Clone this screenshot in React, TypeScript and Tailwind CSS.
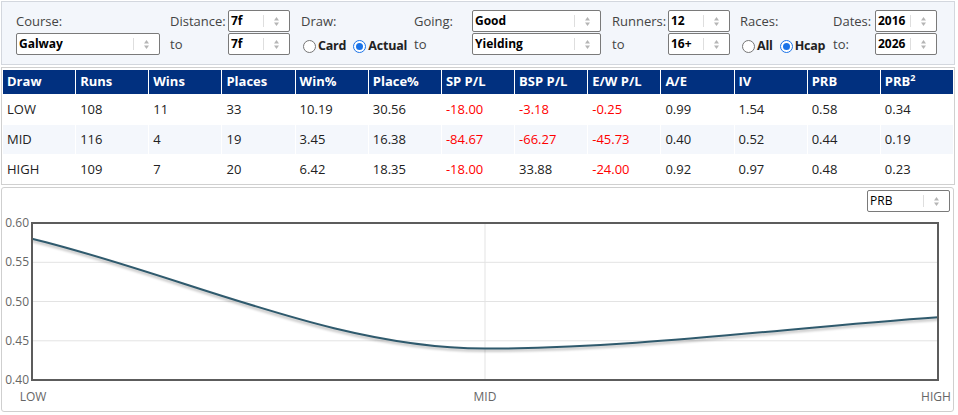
import React from "react";

const font = { fontFamily: '"Open Sans", "Liberation Sans", sans-serif' };

const Arrows = () => (
  <svg width="7" height="11" viewBox="0 0 7 11" className="shrink-0">
    <path d="M3.5 1 L6 4.5 L1 4.5 Z" fill="#b5b5b5" />
    <path d="M3.5 10 L6 6.5 L1 6.5 Z" fill="#b5b5b5" />
  </svg>
);

interface SelectProps {
  value: string;
  width: string;
  bold?: boolean;
}

const Select = ({ value, width, bold = true }: SelectProps) => (
  <div
    className={`flex h-[22px] ${width} items-center rounded-[2px] border border-[#7a7a7a] bg-white text-[12px] text-black`}
  >
    <span className={`flex-1 pl-[2px] ${bold ? "font-bold" : ""}`}>{value}</span>
    <span className="h-[12px] w-px bg-[#dedede]" />
    <span className="flex w-[25px] justify-center">
      <Arrows />
    </span>
  </div>
);

const Radio = ({ checked, label }: { checked?: boolean; label: string }) => (
  <label className="flex items-center gap-[2px]">
    {checked ? (
      <span className="flex h-[13px] w-[13px] items-center justify-center rounded-full border-[1.5px] border-[#1a73e8] bg-white">
        <span className="h-[7px] w-[7px] rounded-full bg-[#1a73e8]" />
      </span>
    ) : (
      <span className="h-[13px] w-[13px] rounded-full border border-[#767676] bg-white" />
    )}
    <span className="text-[12.5px] font-bold tracking-[-0.2px] text-[#222]">{label}</span>
  </label>
);

const Label = ({ children }: { children: React.ReactNode }) => (
  <div className="flex h-[23px] items-center text-[13px] text-[#444]">{children}</div>
);

const headers = ["Draw", "Runs", "Wins", "Places", "Win%", "Place%", "SP P/L", "BSP P/L", "E/W P/L", "A/E", "IV", "PRB"];

const rows = [
  ["LOW", "108", "11", "33", "10.19", "30.56", "-18.00", "-3.18", "-0.25", "0.99", "1.54", "0.58", "0.34"],
  ["MID", "116", "4", "19", "3.45", "16.38", "-84.67", "-66.27", "-45.73", "0.40", "0.52", "0.44", "0.19"],
  ["HIGH", "109", "7", "20", "6.42", "18.35", "-18.00", "33.88", "-24.00", "0.92", "0.97", "0.48", "0.23"],
];

const Chart = () => {
  const curve =
    "M30 26.7 C181 63.3 332 136.6 483 136.6 C634 136.6 785 115.7 936 105.2";
  const yLabels = [
    { t: "0.60", y: 11 },
    { t: "0.55", y: 50.3 },
    { t: "0.50", y: 89.5 },
    { t: "0.45", y: 128.8 },
    { t: "0.40", y: 168 },
  ];
  return (
    <svg width="950" height="198" viewBox="0 0 950 198" className="block">
      <defs>
        <filter id="sh" x="-5%" y="-50%" width="110%" height="200%">
          <feGaussianBlur stdDeviation="1.2" />
        </filter>
      </defs>
      {[50.3, 89.5, 128.8].map((y) => (
        <line key={y} x1="30" x2="936" y1={y} y2={y} stroke="#e3e3e3" strokeWidth="1" />
      ))}
      <line x1="483" x2="483" y1="11" y2="168" stroke="#e3e3e3" strokeWidth="1" />
      <path d={curve} fill="none" stroke="#000" strokeOpacity="0.2" strokeWidth="3" transform="translate(0 2)" filter="url(#sh)" />
      <path d={curve} fill="none" stroke="#2f5a6d" strokeWidth="2" />
      <rect x="30" y="11" width="906" height="157" fill="none" stroke="#5c5c5c" strokeWidth="2" />
      {yLabels.map((l) => (
        <text key={l.t} x="27" y={l.y + 4} textAnchor="end" fontSize="12" fill="#666" style={font}>
          {l.t}
        </text>
      ))}
      <text x="31" y="189" textAnchor="middle" fontSize="12" fill="#666" style={font}>LOW</text>
      <text x="483" y="189" textAnchor="middle" fontSize="12" fill="#666" style={font}>MID</text>
      <text x="934" y="189" textAnchor="middle" fontSize="12" fill="#666" style={font}>HIGH</text>
    </svg>
  );
};

export default function App() {
  return (
    <div style={font} className="w-[958px] bg-white px-[1px] pt-[1px]">
      {/* Filters */}
      <div className="flex h-[64px] w-[954px] border border-[#d3d7de] bg-[#f3f6fb] pl-[14px] pt-[8px]">
        <div className="w-[154px]">
          <Label>Course:</Label>
          <Select value="Galway" width="w-[144px]" />
        </div>
        <div className="flex w-[131px]">
          <div className="w-[58px]">
            <Label>Distance:</Label>
            <Label>to</Label>
          </div>
          <div className="flex flex-col gap-[1px]">
            <Select value="7f" width="w-[62px]" />
            <Select value="7f" width="w-[62px]" />
          </div>
        </div>
        <div className="w-[113px]">
          <Label>Draw:</Label>
          <div className="flex h-[23px] items-center gap-[7px] pl-[2px] pt-[3px]">
            <Radio label="Card" />
            <Radio checked label="Actual" />
          </div>
        </div>
        <div className="flex w-[198px]">
          <div className="w-[58px]">
            <Label>Going:</Label>
            <Label>to</Label>
          </div>
          <div className="flex flex-col gap-[1px]">
            <Select value="Good" width="w-[129px]" />
            <Select value="Yielding" width="w-[129px]" />
          </div>
        </div>
        <div className="flex w-[128px]">
          <div className="w-[56px]">
            <Label>Runners:</Label>
            <Label>to</Label>
          </div>
          <div className="flex flex-col gap-[1px]">
            <Select value="12" width="w-[62px]" />
            <Select value="16+" width="w-[62px]" />
          </div>
        </div>
        <div className="w-[93px]">
          <Label>Races:</Label>
          <div className="flex h-[23px] items-center gap-[7px] pl-[2px] pt-[3px]">
            <Radio label="All" />
            <Radio checked label="Hcap" />
          </div>
        </div>
        <div className="flex">
          <div className="w-[42px]">
            <Label>Dates:</Label>
            <Label>to:</Label>
          </div>
          <div className="flex flex-col gap-[1px]">
            <Select value="2016" width="w-[62px]" />
            <Select value="2026" width="w-[62px]" />
          </div>
        </div>
      </div>

      {/* Table */}
      <div className="mt-[2px] w-[954px] border border-[#d0d0d0] px-[1px] pt-[2px]">
        <div className="grid grid-cols-13 gap-[1px] bg-white">
          {headers.map((h) => (
            <div key={h} className="flex h-[24px] items-center bg-[#01307f] pl-[4px] text-[13px] font-bold text-white">
              {h}
            </div>
          ))}
          <div className="flex h-[24px] items-center bg-[#01307f] pl-[4px] text-[13px] font-bold text-white">
            PRB<sup className="text-[9px]">2</sup>
          </div>
          {rows.map((r, i) =>
            r.map((c, j) => (
              <div
                key={`${i}-${j}`}
                className={`flex h-[29px] items-center pl-[4px] text-[13px] ${
                  i === 1 ? "bg-[#f4f7fc]" : "bg-white"
                } ${c.startsWith("-") ? "text-[#ff0000]" : "text-[#222]"}`}
              >
                {c}
              </div>
            )),
          )}
        </div>
      </div>

      {/* Chart */}
      <div className="mt-[2px] w-[953px] rounded-[3px] border border-[#cfcfcf] pb-[1px] pt-[2px]">
        <div className="flex justify-end pr-[3px]">
          <Select value="PRB" width="w-[83px]" bold={false} />
        </div>
        <Chart />
      </div>
    </div>
  );
}
